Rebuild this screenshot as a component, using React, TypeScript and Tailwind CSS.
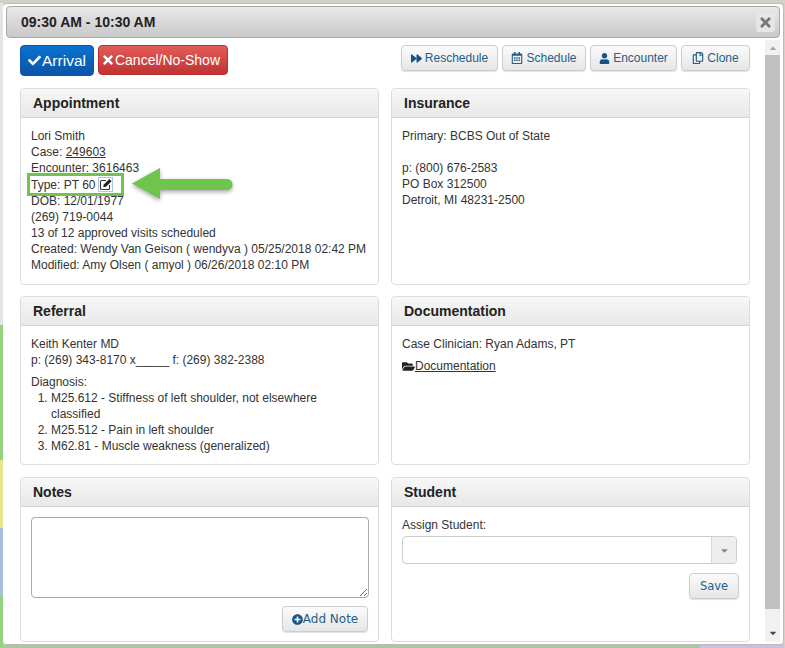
import {
  FaCaretDown,
  FaCaretUp,
  FaCheck,
  FaFolderOpen,
  FaForward,
  FaPlusCircle,
  FaRegCalendarAlt,
  FaRegCopy,
  FaTimes,
  FaUser,
} from "react-icons/fa";
import type { ReactNode } from "react";

function Panel({ title, className, children }: { title: string; className: string; children: ReactNode }) {
  return (
    <section className={`rounded-[4px] border border-[#dddddd] bg-white ${className}`}>
      <h2 className="h-[29px] rounded-t-[4px] border-b border-[#d4d4d4] bg-gradient-to-b from-[#f7f7f7] to-[#e8e8e8] pl-3 text-[14px] font-bold leading-[29px] text-[#222222]">
        {title}
      </h2>
      <div className="px-[10px] pt-[10px]">{children}</div>
    </section>
  );
}

function ToolButton({ icon, label, className }: { icon: ReactNode; label: string; className: string }) {
  return (
    <button className={`flex h-[26px] items-center justify-center gap-[3px] rounded-[4px] border border-[#cccccc] bg-gradient-to-b from-[#fbfbfb] to-[#e6e6e6] text-[12px] text-[#1f5f8b] shadow-[0_1px_1px_rgba(0,0,0,0.12)] ${className}`}>
      {icon}
      {label}
    </button>
  );
}

function EditIcon() {
  return (
    <svg width="13" height="13" viewBox="0 0 13 13">
      <path d="M7 2.5H2.5a1 1 0 0 0-1 1v7a1 1 0 0 0 1 1h7a1 1 0 0 0 1-1V7" fill="none" stroke="#333333" strokeWidth="1.1" />
      <path d="M4.2 9.2 L4.8 6.6 L10.4 1 L12.6 3.2 L7 8.7 Z" fill="#222222" />
    </svg>
  );
}

export default function App() {
  return (
    <div className="relative flex h-[648px] w-[785px] overflow-hidden bg-[#d4d0c8] font-['Liberation_Sans',Arial,sans-serif] text-[12px] leading-[16px] text-[#333333]">
      <div className="mt-[3px] flex w-[3px] shrink-0 flex-col bg-[#e4e4e4]">
        <div className="h-[322px]" />
        <div className="h-[135px] bg-[#93d37f]" />
        <div className="h-[68px] bg-[#e8e58f]" />
        <div className="h-[68px] bg-[#a9bde0]" />
        <div className="flex-1 bg-[#93d37f]" />
      </div>
      <div className="mt-[3px] flex w-[781px] shrink-0 flex-col">
        <div className="flex h-[642px] flex-col rounded-[4px] border-y border-r border-[#bbbbbb] bg-white pb-[2px] pl-[3px] pr-[3px]">
          <header className="mt-[2px] flex h-[32px] w-[774px] shrink-0 items-center justify-between rounded-[4px] border border-[#a8a8a8] bg-gradient-to-b from-[#e8e8e8] to-[#c9c9c9] pl-[14px] pr-[4px]">
            <span className="text-[14px] font-bold text-[#222222]">09:30 AM - 10:30 AM</span>
            <span className="flex h-[19px] w-[19px] items-center justify-center rounded-[3px] bg-[#e6e6e6] text-[#777777]">
              <FaTimes size={15} />
            </span>
          </header>
          <div className="flex min-h-0 flex-1">
            <main className="w-[759px] shrink-0 pl-[14px] pr-[15px] pt-[7px]">
              <div className="flex h-[43px] items-start">
                <button className="flex h-[31px] w-[74px] items-center justify-center gap-[1px] rounded-[4px] border border-[#0b56a8] bg-gradient-to-b from-[#0a72d0] to-[#0a55a8] text-[15.5px] text-white">
                  <FaCheck size={13} />
                  Arrival
                </button>
                <button className="ml-[4px] flex h-[30px] w-[130px] items-center justify-center rounded-[4px] border border-[#b92f2f] bg-gradient-to-b from-[#e25c5a] to-[#bf3331] pr-[5px] text-[14px] text-white">
                  <FaTimes size={14} />
                  Cancel/No-Show
                </button>
                <div className="ml-auto flex gap-[4px]">
                  <ToolButton className="w-[97px]" icon={<FaForward size={11} className="text-[#12558c]" />} label="Reschedule" />
                  <ToolButton className="w-[84px]" icon={<FaRegCalendarAlt size={12} className="text-[#1f5f8b]" />} label="Schedule" />
                  <ToolButton className="w-[87px]" icon={<FaUser size={11} className="text-[#12558c]" />} label="Encounter" />
                  <ToolButton className="w-[69px]" icon={<FaRegCopy size={12} />} label="Clone" />
                </div>
              </div>
              <div className="grid grid-cols-[359px_359px] gap-x-[12px]">
                <Panel title="Appointment" className="h-[197px]">
                  <p>Lori Smith</p>
                  <p>
                    Case: <u>249603</u>
                  </p>
                  <p>Encounter: 3616463</p>
                  <p className="flex h-[17px] items-center gap-[3px]">
                    Type: PT 60
                    <span className="flex h-[15px] w-[15px] items-center justify-center border border-[#a9c4ee]">
                      <EditIcon />
                    </span>
                  </p>
                  <p>DOB: 12/01/1977</p>
                  <p>(269) 719-0044</p>
                  <p>13 of 12 approved visits scheduled</p>
                  <p>Created: Wendy Van Geison ( wendyva ) 05/25/2018 02:42 PM</p>
                  <p>Modified: Amy Olsen ( amyol ) 06/26/2018 02:10 PM</p>
                </Panel>
                <Panel title="Insurance" className="h-[197px]">
                  <p>Primary: BCBS Out of State</p>
                  <p className="mt-[16px]">p: (800) 676-2583</p>
                  <p>PO Box 312500</p>
                  <p>Detroit, MI 48231-2500</p>
                </Panel>
                <Panel title="Referral" className="mt-[11px] h-[169px]">
                  <p>Keith Kenter MD</p>
                  <p>p: (269) 343-8170 x_____ f: (269) 382-2388</p>
                  <p className="mt-[6px]">Diagnosis:</p>
                  <ol className="list-decimal pl-[20px]">
                    <li>M25.612 - Stiffness of left shoulder, not elsewhere classified</li>
                    <li>M25.512 - Pain in left shoulder</li>
                    <li>M62.81 - Muscle weakness (generalized)</li>
                  </ol>
                </Panel>
                <Panel title="Documentation" className="mt-[11px] h-[169px]">
                  <p>Case Clinician: Ryan Adams, PT</p>
                  <a className="mt-[6px] flex items-center underline">
                    <FaFolderOpen size={13} className="text-[#222222]" />
                    Documentation
                  </a>
                </Panel>
                <Panel title="Notes" className="mt-[12px] h-[165px]">
                  <textarea className="block h-[81px] w-[338px] rounded-[4px] border border-[#aaaaaa] bg-white" />
                  <div className="mt-[8px] flex justify-end">
                    <button className="flex h-[26px] w-[86px] items-center justify-center rounded-[4px] border border-[#cccccc] bg-gradient-to-b from-[#fbfbfb] to-[#e6e6e6] font-['DejaVu_Sans',sans-serif] text-[12px] text-[#1f5f8b] shadow-[0_1px_1px_rgba(0,0,0,0.12)]">
                      <FaPlusCircle size={11} className="text-[#12558c]" />
                      Add Note
                    </button>
                  </div>
                </Panel>
                <Panel title="Student" className="mt-[12px] h-[165px]">
                  <p>Assign Student:</p>
                  <div className="mt-[3px] flex h-[28px] w-[335px] rounded-[4px] border border-[#cccccc]">
                    <div className="flex-1" />
                    <div className="flex w-[25px] items-center justify-center rounded-r-[4px] border-l border-[#d8d8d8] bg-[#eeeeee] text-[#888888]">
                      <FaCaretDown size={11} />
                    </div>
                  </div>
                  <div className="mt-[9px] flex justify-end">
                    <button className="h-[26px] w-[50px] rounded-[4px] border border-[#cccccc] bg-gradient-to-b from-[#fbfbfb] to-[#e6e6e6] font-['DejaVu_Sans',sans-serif] text-[11.5px] text-[#1f5f8b] shadow-[0_1px_1px_rgba(0,0,0,0.12)]">
                      Save
                    </button>
                  </div>
                </Panel>
              </div>
            </main>
            <div className="mt-[2px] flex w-[15px] shrink-0 flex-col items-center bg-[#f1f1f1]">
              <FaCaretUp size={10} className="mt-[3px] text-[#a8a8a8]" />
              <div className="mt-[2px] h-[554px] w-full shrink-0 bg-[#c1c1c1]" />
              <div className="flex-1" />
              <FaCaretDown size={10} className="mb-[4px] text-[#505050]" />
            </div>
          </div>
        </div>
        <div className="flex h-[3px]">
          <div className="w-[697px] bg-[#a9c8a0]" />
          <div className="flex-1 bg-[#c9bfe0]" />
        </div>
      </div>
      {/* green callout drawn over the screenshot */}
      <div className="absolute left-[27px] top-[173px] h-[23px] w-[97px] border-[3px] border-[#6fc44c]" />
      <svg className="absolute left-[130px] top-[166px] drop-shadow-[0_2px_2px_rgba(0,0,0,0.35)]" width="110" height="38" viewBox="0 0 110 38">
        <path d="M2 17.5 L30 2 L30 13 L97 13 A5.5 5.5 0 0 1 97 24 L30 24 L30 33 Z" fill="#6fc44c" />
      </svg>
    </div>
  );
}
